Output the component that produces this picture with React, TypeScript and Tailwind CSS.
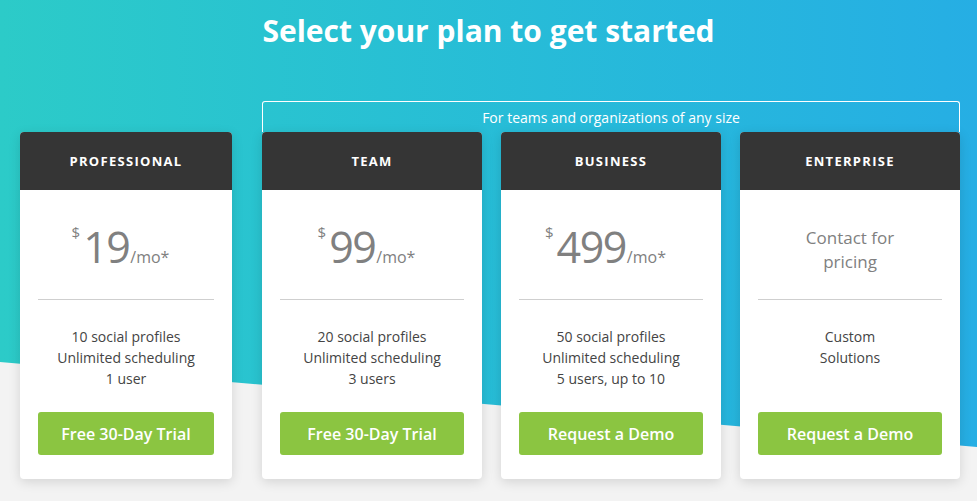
import React from 'react';

type Plan = {
  name: string;
  price?: string;
  features: string[];
  cta: string;
  width: string;
};

const plans: Plan[] = [
  { name: 'PROFESSIONAL', price: '19', features: ['10 social profiles', 'Unlimited scheduling', '1 user'], cta: 'Free 30-Day Trial', width: 'w-[212px]' },
  { name: 'TEAM', price: '99', features: ['20 social profiles', 'Unlimited scheduling', '3 users'], cta: 'Free 30-Day Trial', width: 'w-[220px]' },
  { name: 'BUSINESS', price: '499', features: ['50 social profiles', 'Unlimited scheduling', '5 users, up to 10'], cta: 'Request a Demo', width: 'w-[220px]' },
  { name: 'ENTERPRISE', features: ['Custom', 'Solutions'], cta: 'Request a Demo', width: 'w-[220px]' },
];

function PlanCard({ plan }: { plan: Plan }) {
  return (
    <div className={`${plan.width} shrink-0 overflow-hidden rounded-[4px] bg-white shadow-[0_3px_12px_rgba(0,0,0,0.13)]`}>
      <div className="flex h-[58px] items-center justify-center bg-[#353535] pt-[2px] text-[13px] font-bold tracking-[1.3px] text-white">
        {plan.name}
      </div>
      <div className="px-[18px] pb-[24px]">
        <div className="flex h-[110px] items-center justify-center border-b border-[#cfcfcf] text-[#808080]">
          {plan.price ? (
            <div className="mt-[4px] mr-[11px] flex items-baseline leading-none">
              <span className="mr-[3px] self-start text-[15px]">$</span>
              <span className="text-[43px] font-medium tracking-[-1.5px]">{plan.price}</span>
              <span className="ml-[1px] text-[16px]">/mo*</span>
            </div>
          ) : (
            <div className="mt-[10px] text-center text-[17px] leading-[24px] font-medium">
              Contact for
              <br />
              pricing
            </div>
          )}
        </div>
        <div className="h-[112px] pt-[26px] text-center text-[14px] leading-[21px] text-[#444]">
          {plan.features.map((f) => (
            <div key={f}>{f}</div>
          ))}
        </div>
        <button className="flex h-[43px] w-full items-center justify-center rounded-[3px] bg-[#8bc541] text-[16px] font-semibold text-white">
          {plan.cta}
        </button>
      </div>
    </div>
  );
}

export default function App() {
  return (
    <div className="relative h-[501px] w-[977px] overflow-hidden bg-gradient-to-r from-[#2ccbc8] to-[#26aee4] font-['Open_Sans',sans-serif]">
      <div className="absolute inset-0 bg-[#f3f3f3] [clip-path:polygon(0_362px,100%_447px,100%_100%,0_100%)]" />
      <div className="relative">
        <h1 className="pt-[10px] text-center text-[30px] leading-[41px] font-bold text-white">
          Select your plan to get started
        </h1>
        <div className="mt-[50px] flex items-end pl-[20px]">
          <PlanCard plan={plans[0]} />
          <div className="ml-[30px] flex flex-col">
            <div className="flex h-[31px] items-center justify-center rounded-t-[3px] border border-b-0 border-white text-[14px] text-white">
              For teams and organizations of any size
            </div>
            <div className="flex gap-[19px]">
              {plans.slice(1).map((p) => (
                <PlanCard key={p.name} plan={p} />
              ))}
            </div>
          </div>
        </div>
      </div>
    </div>
  );
}
